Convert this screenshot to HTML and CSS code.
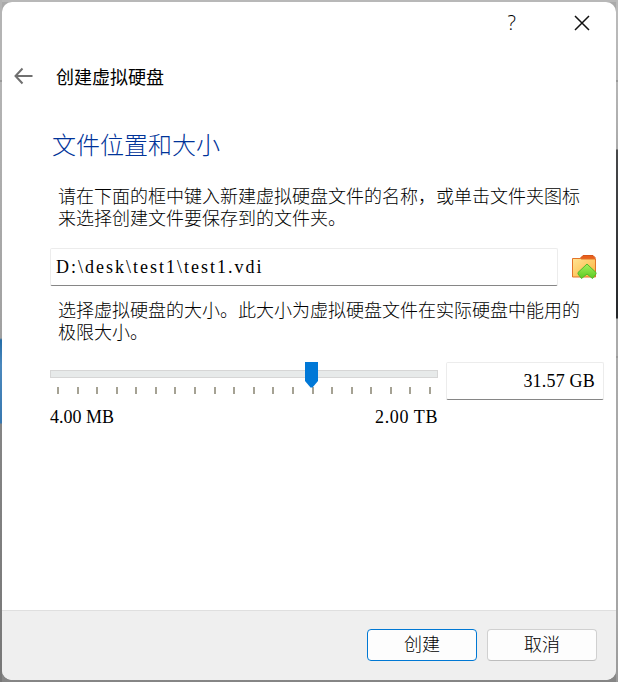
FILE: index.html
```
<!DOCTYPE html>
<html lang="zh-CN">
<head>
    <meta charset="UTF-8">
    <meta name="viewport" content="width=device-width, initial-scale=1.0">
    <title>创建虚拟硬盘</title>
    <link rel="stylesheet" href="styles.css">
</head>
<body>
    <div class="edge edge-left"></div>
    <div class="dialog">
        <div class="titlebar">
            <span class="help">?</span>
            <svg class="close" width="16" height="16" viewBox="0 0 16 16">
                <path d="M1 1L15 15M15 1L1 15" stroke="#111" stroke-width="1.5" fill="none"/>
            </svg>
        </div>

        <div class="header">
            <svg class="back" width="20" height="18" viewBox="0 0 20 18">
                <path d="M9.500 1.500L2.500 9l7 7.500M2.500 9h17" stroke="#707070" stroke-width="2" fill="none"/>
            </svg>
            <span class="header-title">创建虚拟硬盘</span>
        </div>

        <div class="content">
            <h1>文件位置和大小</h1>

            <p class="location-text">请在下面的框中键入新建虚拟硬盘文件的名称，或单击文件夹图标<br>来选择创建文件要保存到的文件夹。</p>
            <div class="location-row">
                <div class="field path-field">D:\desk\test1\test1.vdi</div>
                <svg class="folder" width="26" height="26" viewBox="0 0 26 26">
                    <defs>
                        <linearGradient id="folderFill" x1="0" y1="0" x2="1" y2="1">
                            <stop offset="0" stop-color="#ffe494"/>
                            <stop offset="1" stop-color="#fdb33c"/>
                        </linearGradient>
                        <linearGradient id="arrowFill" x1="0" y1="0" x2="0" y2="1">
                            <stop offset="0" stop-color="#a4ee5c"/>
                            <stop offset="1" stop-color="#5ccb22"/>
                        </linearGradient>
                    </defs>
                    <path d="M9.500 4L12 1.500h10l2 2V7H9z" fill="#e8601c" stroke="#d6551a"/>
                    <path d="M1.500 4.500h8l1 .5H24.500v18h-23z" fill="url(#folderFill)" stroke="#e3742a"/>
                    <path d="M16 10L25 18.500v1.500L21.500 24.500 16 20 10.500 24.500 7 20v-1.500z" fill="url(#arrowFill)" stroke="#54b82c"/>
                </svg>
            </div>

            <p class="size-text">选择虚拟硬盘的大小。此大小为虚拟硬盘文件在实际硬盘中能用的<br>极限大小。</p>
            <div class="size-row">
                <div class="slider">
                    <div class="track">
                        <svg class="thumb" width="13" height="26" viewBox="0 0 13 26">
                            <path d="M0 0h13v19L7.500 25.500h-2L0 19z" fill="#0078d7"/>
                        </svg>
                    </div>
                    <div class="ticks">
                        <i></i><i></i><i></i><i></i><i></i>
                        <i></i><i></i><i></i><i></i><i></i>
                        <i></i><i></i><i></i><i></i><i></i>
                        <i></i><i></i><i></i><i></i><i></i>
                    </div>
                    <div class="limits">
                        <span>4.00 MB</span>
                        <span class="limit-max">2.00 TB</span>
                    </div>
                </div>
                <div class="field size-field">31.57 GB</div>
            </div>
        </div>

        <div class="footer">
            <button class="btn btn-primary">创建</button>
            <button class="btn">取消</button>
        </div>
    </div>
    <div class="edge edge-right"></div>
</body>
</html>
```

FILE: styles.css
```
* {
    box-sizing: border-box;
}

body {
    margin: 0;
    height: 682px;
    display: flex;
    overflow: hidden;
    background: linear-gradient(#b8b8b8 0 2px, #aaa 2px 600px, #858585 682px);
    font-family: "Liberation Serif", "Noto Sans CJK SC", sans-serif;
    font-size: 18px;
    font-weight: 300;
    color: #000;
}

/* what shows of the windows behind the dialog */
.edge {
    width: 2px;
    height: 682px;
}

.edge-left {
    background: linear-gradient(#b4b4b4 0, #b4b4b4 80px, #999 80px, #999 82px, #b4b4b4 82px, #a0a0a0 338px, #246da8 340px, #4b88bd 365px, #3878b0 423px, #858585 424px, #777 682px);
}

.edge-right {
    background: linear-gradient(#bbb 0, #b5b5b5 80px, #999 80px, #999 82px, #b5b5b5 82px, #aaa 149px, #48494b 150px, #25272a 318px, #aaa 319px, #aaa 356px, #888 357px, #aaa 358px, #a5a5a5 616px, #999 682px);
}

.dialog {
    width: 614px;
    height: 678px;
    margin-top: 2px;
    background: #fff;
    border-radius: 10px;
    overflow: hidden;
    display: flex;
    flex-direction: column;
}

.titlebar {
    height: 41px;
    padding: 0 26px 0 0;
    display: flex;
    align-items: center;
    justify-content: flex-end;
}

.help {
    font-family: "Open Sans", sans-serif;
    font-size: 20px;
    line-height: 40px;
    font-weight: 300;
    margin-right: 58px;
}

.header {
    height: 66px;
    padding: 0 0 0 11px;
    display: flex;
    align-items: center;
}

.header-title {
    font-family: "Noto Sans CJK SC", sans-serif;
    font-weight: 400;
    margin-left: 23px;
    line-height: 26px;
}

.content {
    flex: 1;
    padding: 21px 12px 0 48px;
}

h1 {
    margin: 0 0 24px 2px;
    font-size: 24px;
    font-weight: 300;
    line-height: 32px;
    color: #003399;
}

p {
    margin: 0 0 0 8px;
    line-height: 22px;
    white-space: nowrap;
}

.location-row {
    display: flex;
    align-items: center;
    margin: 18px 0 14px;
}

.field {
    height: 38px;
    background: #fff;
    border: 1px solid #ececec;
    border-bottom: 1px solid #868686;
    border-radius: 2px;
    line-height: 37px;
}

.path-field {
    width: 508px;
    padding-left: 5px;
    letter-spacing: 2px;
}

.folder {
    margin-left: 13px;
}

.size-row {
    display: flex;
    margin-top: 18px;
}

.slider {
    width: 388px;
    padding-top: 8px;
}

.track {
    position: relative;
    height: 8px;
    background: #e7eaea;
    border: 1px solid #d6d6d6;
}

.thumb {
    position: absolute;
    left: 254px;
    top: -9px;
}

.ticks {
    display: flex;
    justify-content: space-between;
    margin: 9px 7px 0;
}

.ticks i {
    width: 2px;
    height: 7px;
    background: #a5a294;
}

.limits {
    display: flex;
    justify-content: space-between;
    margin-top: 12px;
    line-height: 22px;
}

.limit-max {
    letter-spacing: 0.6px;
}

.size-field {
    width: 158px;
    margin-left: 8px;
    padding-right: 8px;
    text-align: right;
    letter-spacing: 0.2px;
}

.footer {
    height: 70px;
    padding: 0 19px 2px 0;
    background: #efefef;
    border-top: 1px solid #dfdfdf;
    display: flex;
    align-items: center;
    justify-content: flex-end;
    gap: 10px;
}

.btn {
    width: 110px;
    height: 32px;
    padding: 0;
    background: #fdfdfd;
    border: 1px solid #d0d0d0;
    border-bottom-color: #bdbdbd;
    border-radius: 4px;
    font: inherit;
    line-height: 28px;
    color: #000;
}

.btn-primary {
    border-color: #0078d4;
}
```
